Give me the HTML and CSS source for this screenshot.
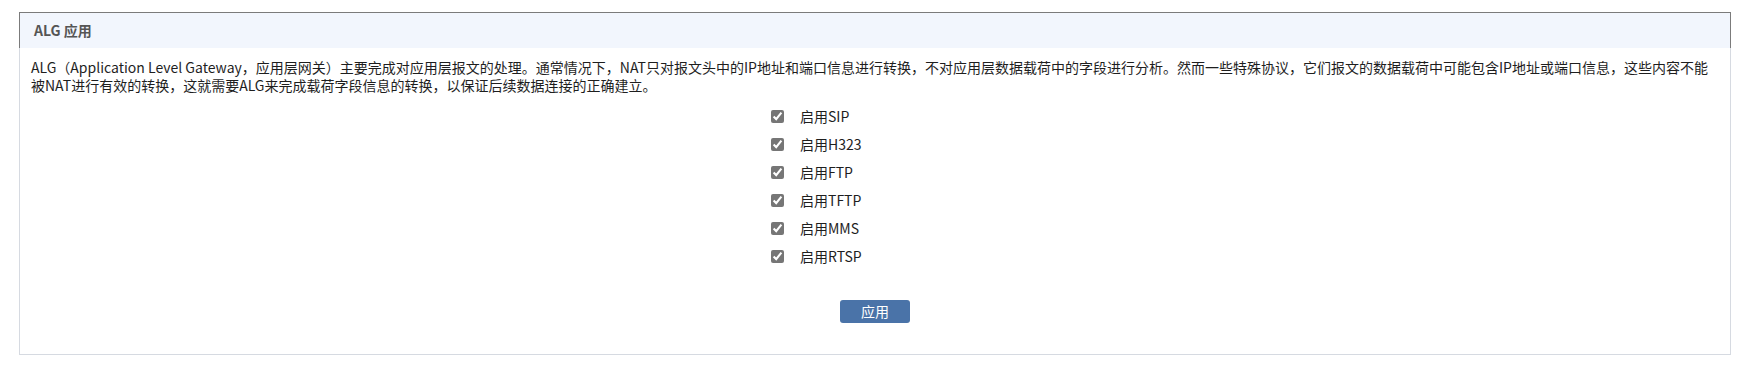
FILE: index.html
```html
<!DOCTYPE html>
<html lang="zh-CN">
<head>
    <meta charset="UTF-8">
    <meta name="viewport" content="width=device-width, initial-scale=1.0">
    <title>ALG 应用</title>
    <link rel="stylesheet" href="styles.css">
</head>
<body>

<div class="panel">
    <div class="panel-head">ALG 应用</div>
    <div class="panel-body">
        <p class="desc">ALG（Application Level Gateway，应用层网关）主要完成对应用层报文的处理。通常情况下，NAT只对报文头中的IP地址和端口信息进行转换，不对应用层数据载荷中的字段进行分析。然而一些特殊协议，它们报文的数据载荷中可能包含IP地址或端口信息，这些内容不能被NAT进行有效的转换，这就需要ALG来完成载荷字段信息的转换，以保证后续数据连接的正确建立。</p>
        <form class="alg-form" action="#" method="POST">
            <div class="check-list">
                <label class="check-row"><input type="checkbox" name="sip" checked><span>启用SIP</span></label>
                <label class="check-row"><input type="checkbox" name="h323" checked><span>启用H323</span></label>
                <label class="check-row"><input type="checkbox" name="ftp" checked><span>启用FTP</span></label>
                <label class="check-row"><input type="checkbox" name="tftp" checked><span>启用TFTP</span></label>
                <label class="check-row"><input type="checkbox" name="mms" checked><span>启用MMS</span></label>
                <label class="check-row"><input type="checkbox" name="rtsp" checked><span>启用RTSP</span></label>
            </div>
            <div class="actions">
                <button type="submit">应用</button>
            </div>
        </form>
    </div>
</div>

</body>
</html>
```

FILE: styles.css
```css
/* Estilos gerais */
body {
    font-family: "Noto Sans CJK SC", "Noto Sans", sans-serif;
    font-size: 14px;
    color: #1e1e1e;
    margin: 0;
    padding: 12px 12px 0 19px;
    background: #ffffff;
}

.panel {
    background: #ffffff;
}

/* Cabeçalho do painel */
.panel-head {
    height: 35px;
    line-height: 35px;
    padding-left: 14px;
    border: 1px solid #7b7b7b;
    border-bottom: none;
    background-color: #f2f6fd;
    color: #555555;
    font-size: 14px;
    font-weight: bold;
}

.panel-body {
    padding: 10px 11px 31px;
    border: 1px solid #d6dae1;
    border-top: none;
}

.desc {
    margin: 0;
    line-height: 18px;
}

/* Lista de opções */
.check-list {
    width: 208px;
    margin: 8px auto 0;
}

.check-row {
    display: flex;
    align-items: center;
    height: 28px;
    cursor: pointer;
}

.check-row input {
    width: 13px;
    height: 13px;
    margin: 0;
    accent-color: #767676;
}

.check-row span {
    margin-left: 16px;
}

/* Botão */
.actions {
    display: flex;
    justify-content: center;
    margin-top: 30px;
}

button {
    width: 70px;
    height: 23px;
    padding: 0;
    background-color: #4a73a8;
    color: #ffffff;
    border: none;
    border-radius: 3px;
    font-family: inherit;
    font-size: 14px;
    line-height: 23px;
    cursor: pointer;
}

button:hover {
    background-color: #3d6293;
}
```
